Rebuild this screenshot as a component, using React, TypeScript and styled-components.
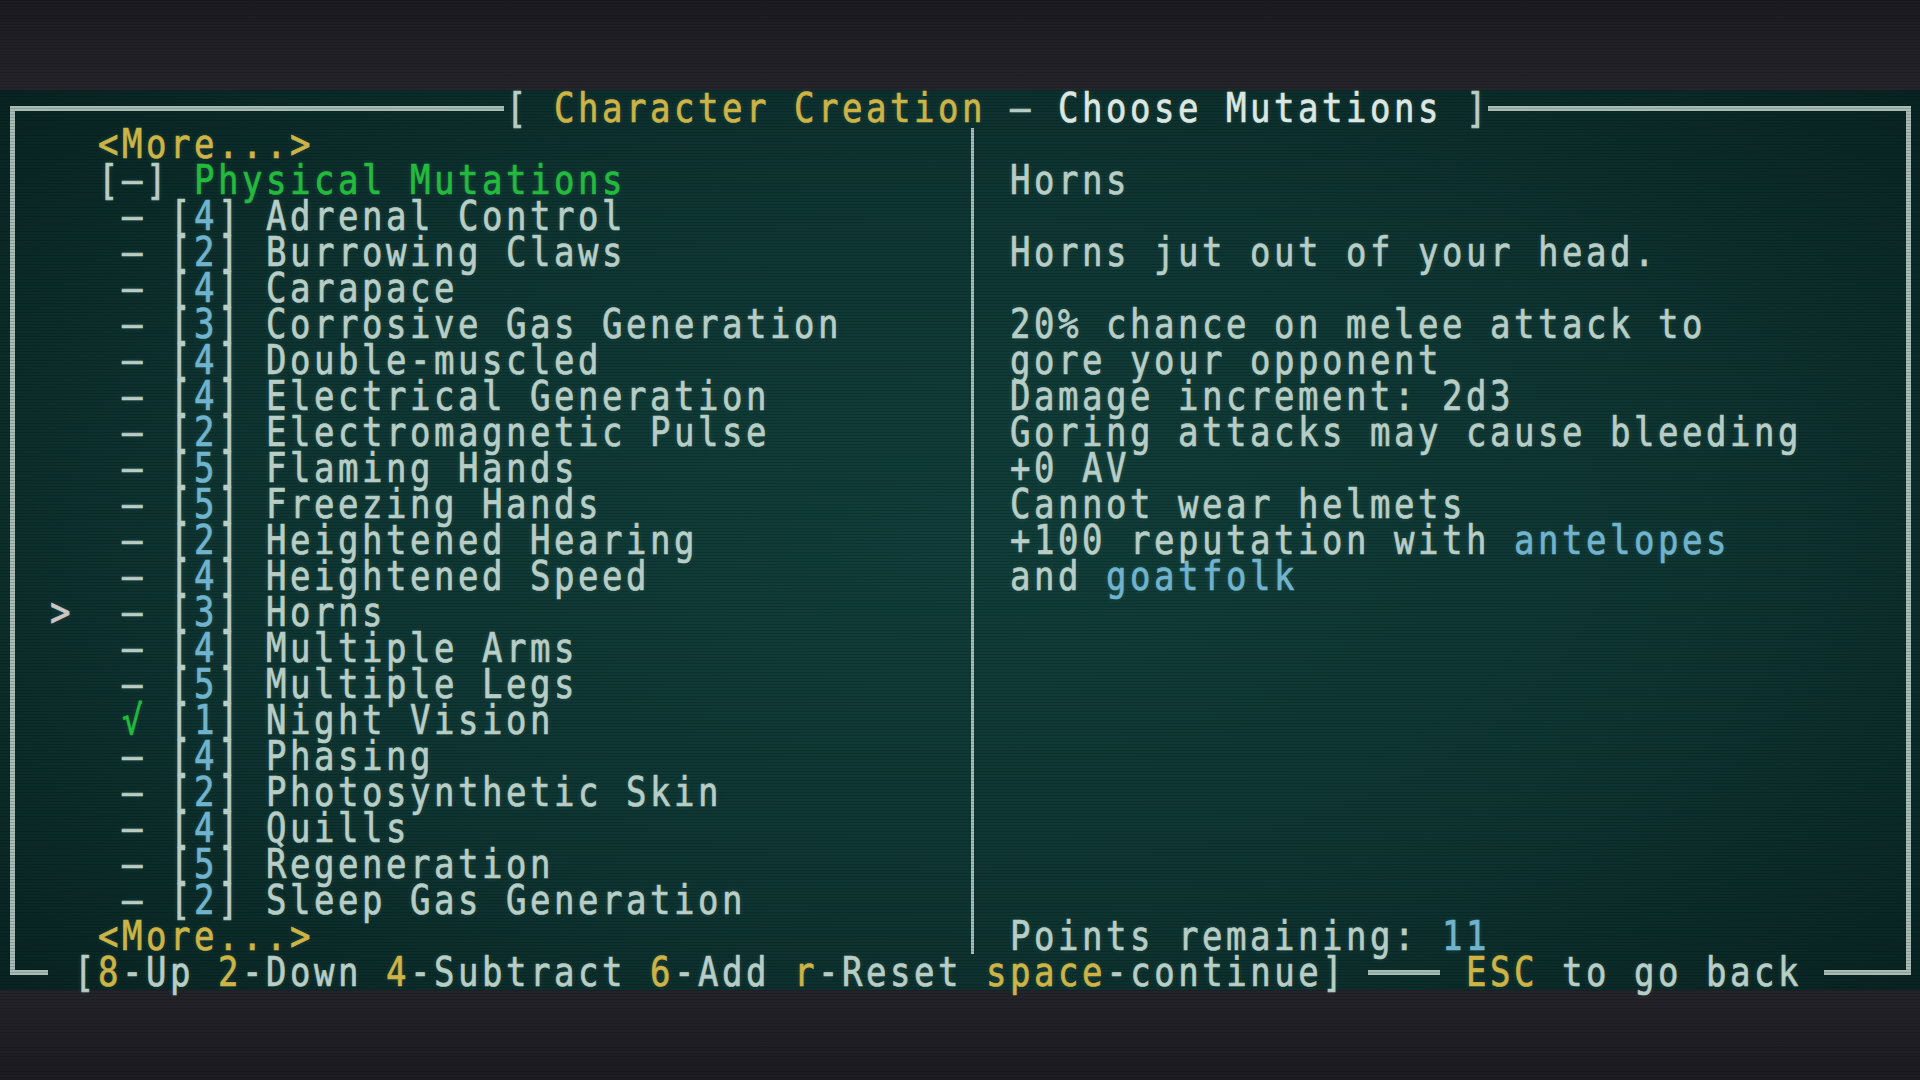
import React from 'react';
import styled, { createGlobalStyle } from 'styled-components';

// terminal grid: 80 x 25 cells of 24 x 36
const CELL_W = 24;
const CELL_H = 36;
const SQUEEZE = 0.85;
const FONT_SIZE = 40;
const ADVANCE = FONT_SIZE * 0.60205;
const SPACING = CELL_W / SQUEEZE - ADVANCE;
const NUDGE = CELL_W / 2 - (ADVANCE / 2) * SQUEEZE;

const colors = {
  text: '#b8cdc5',
  bright: '#dde7e2',
  line: '#a6bcb4',
  yellow: '#cdb444',
  green: '#22bb3c',
  blue: '#70b3ce',
  cursor: '#cdc5c4',
};

type Tone = keyof typeof colors;

const GlobalStyle = createGlobalStyle`
  html, body {
    margin: 0;
    padding: 0;
    background: #222127;
  }
  body {
    width: 1920px;
    height: 1080px;
    overflow: hidden;
  }
`;

const Monitor = styled.div`
  position: relative;
  width: 1920px;
  height: 1080px;
  display: flex;
  flex-direction: column;
  justify-content: center;
  overflow: hidden;
  background: linear-gradient(180deg, #1c1b21 0%, #25242b 8%, #24232a 92%, #1d1c22 100%);

  &::after {
    content: '';
    position: absolute;
    inset: 0;
    pointer-events: none;
    background: repeating-linear-gradient(
      180deg,
      rgba(0, 0, 0, 0.16) 0px,
      rgba(0, 0, 0, 0.16) 1px,
      transparent 1px,
      transparent 3px
    );
  }
`;

const Screen = styled.div`
  display: grid;
  grid-template-columns: repeat(80, ${CELL_W}px);
  grid-template-rows: repeat(25, ${CELL_H}px);
  background: radial-gradient(
    ellipse 70% 75% at 50% 50%,
    #113e3a 0%,
    #0e3532 55%,
    #082321 100%
  );
  font-family: 'DejaVu Sans Mono', 'Liberation Mono', monospace;
`;

const HLine = styled.div<{ $row: number; $from: number; $to: number; $inL?: number; $inR?: number }>`
  grid-row: ${(p) => p.$row + 1};
  grid-column: ${(p) => p.$from + 1} / ${(p) => p.$to + 2};
  align-self: center;
  height: 5px;
  margin-left: ${(p) => p.$inL ?? 0}px;
  margin-right: ${(p) => p.$inR ?? 0}px;
  background: ${colors.line};
`;

const VLine = styled.div<{ $col: number; $from: number; $to: number; $w: number; $inT?: number; $inB?: number }>`
  grid-column: ${(p) => p.$col + 1};
  grid-row: ${(p) => p.$from + 1} / ${(p) => p.$to + 2};
  justify-self: center;
  width: ${(p) => p.$w}px;
  margin-top: ${(p) => p.$inT ?? 0}px;
  margin-bottom: ${(p) => p.$inB ?? 0}px;
  background: ${colors.line};
`;

const Line = styled.div<{ $row: number; $col: number }>`
  grid-row: ${(p) => p.$row + 1};
  grid-column: ${(p) => p.$col + 1} / -1;
  z-index: 1;
  height: ${CELL_H}px;
  white-space: pre;
  font-size: ${FONT_SIZE}px;
  line-height: ${CELL_H}px;
  letter-spacing: ${SPACING}px;
  color: ${colors.text};
  margin-left: ${NUDGE}px;
  transform: scaleX(${SQUEEZE});
  transform-origin: 0 50%;
  -webkit-text-stroke: 0.7px currentColor;
  text-shadow: 0 0 6px rgba(140, 210, 190, 0.2);
`;

const Seg = styled.span<{ $c: Tone }>`
  color: ${(p) => colors[p.$c]};
`;

const MUTATIONS: [number, string][] = [
  [4, 'Adrenal Control'],
  [2, 'Burrowing Claws'],
  [4, 'Carapace'],
  [3, 'Corrosive Gas Generation'],
  [4, 'Double-muscled'],
  [4, 'Electrical Generation'],
  [2, 'Electromagnetic Pulse'],
  [5, 'Flaming Hands'],
  [5, 'Freezing Hands'],
  [2, 'Heightened Hearing'],
  [4, 'Heightened Speed'],
  [3, 'Horns'],
  [4, 'Multiple Arms'],
  [5, 'Multiple Legs'],
  [1, 'Night Vision'],
  [4, 'Phasing'],
  [2, 'Photosynthetic Skin'],
  [4, 'Quills'],
  [5, 'Regeneration'],
  [2, 'Sleep Gas Generation'],
];

const CURSOR = 'Horns';
const CHOSEN = ['Night Vision'];

const DESCRIPTION: { row: number; parts: [string, Tone][] }[] = [
  { row: 2, parts: [['Horns', 'text']] },
  { row: 4, parts: [['Horns jut out of your head.', 'text']] },
  { row: 6, parts: [['20% chance on melee attack to', 'text']] },
  { row: 7, parts: [['gore your opponent', 'text']] },
  { row: 8, parts: [['Damage increment: 2d3', 'text']] },
  { row: 9, parts: [['Goring attacks may cause bleeding', 'text']] },
  { row: 10, parts: [['+0 AV', 'text']] },
  { row: 11, parts: [['Cannot wear helmets', 'text']] },
  { row: 12, parts: [['+100 reputation with ', 'text'], ['antelopes', 'blue']] },
  { row: 13, parts: [['and ', 'text'], ['goatfolk', 'blue']] },
  { row: 23, parts: [['Points remaining: ', 'text'], ['11', 'blue']] },
];

const KEYS: [string, Tone][] = [
  ['[', 'text'],
  ['8', 'yellow'],
  ['-Up ', 'text'],
  ['2', 'yellow'],
  ['-Down ', 'text'],
  ['4', 'yellow'],
  ['-Subtract ', 'text'],
  ['6', 'yellow'],
  ['-Add ', 'text'],
  ['r', 'yellow'],
  ['-Reset ', 'text'],
  ['space', 'yellow'],
  ['-continue]', 'text'],
];

const Parts = ({ parts }: { parts: [string, Tone][] }) => (
  <>
    {parts.map(([t, c], i) => (
      <Seg key={i} $c={c}>
        {t}
      </Seg>
    ))}
  </>
);

const MutationRow = ({ row, cost, name }: { row: number; cost: number; name: string }) => {
  const chosen = CHOSEN.includes(name);
  return (
    <Line $row={row} $col={2}>
      <Seg $c="cursor">{name === CURSOR ? '>' : ' '}</Seg>
      {'  '}
      <Seg $c={chosen ? 'green' : 'text'}>{chosen ? '√' : '–'}</Seg>
      {' ['}
      <Seg $c="blue">{cost}</Seg>
      {'] '}
      {name}
    </Line>
  );
};

export default function App() {
  return (
    <>
      <GlobalStyle />
      <Monitor>
        <Screen>
          {/* frame */}
          <HLine $row={0} $from={0} $to={20} $inL={9.5} />
          <HLine $row={0} $from={62} $to={79} $inR={9.5} />
          <VLine $col={0} $from={0} $to={24} $w={5} $inT={15.5} $inB={15.5} />
          <VLine $col={79} $from={0} $to={24} $w={5} $inT={15.5} $inB={15.5} />
          <VLine $col={40} $from={1} $to={23} $w={3} $inT={2} />
          <HLine $row={24} $from={0} $to={1} $inL={9.5} />
          <HLine $row={24} $from={57} $to={59} />
          <HLine $row={24} $from={76} $to={79} $inR={9.5} />

          <Line $row={0} $col={21}>
            <Parts
              parts={[
                ['[ ', 'text'],
                ['Character Creation', 'yellow'],
                [' – ', 'text'],
                ['Choose Mutations', 'bright'],
                [' ]', 'text'],
              ]}
            />
          </Line>

          {/* mutation list */}
          <Line $row={1} $col={4}>
            <Seg $c="yellow">{'<More...>'}</Seg>
          </Line>
          <Line $row={2} $col={4}>
            {'[–] '}
            <Seg $c="green">Physical Mutations</Seg>
          </Line>
          {MUTATIONS.map(([cost, name], i) => (
            <MutationRow key={name} row={3 + i} cost={cost} name={name} />
          ))}
          <Line $row={23} $col={4}>
            <Seg $c="yellow">{'<More...>'}</Seg>
          </Line>

          {/* description */}
          {DESCRIPTION.map((d) => (
            <Line key={d.row} $row={d.row} $col={42}>
              <Parts parts={d.parts} />
            </Line>
          ))}

          {/* footer */}
          <Line $row={24} $col={3}>
            <Parts parts={KEYS} />
          </Line>
          <Line $row={24} $col={61}>
            <Parts parts={[['ESC', 'yellow'], [' to go back', 'text']]} />
          </Line>
        </Screen>
      </Monitor>
    </>
  );
}
